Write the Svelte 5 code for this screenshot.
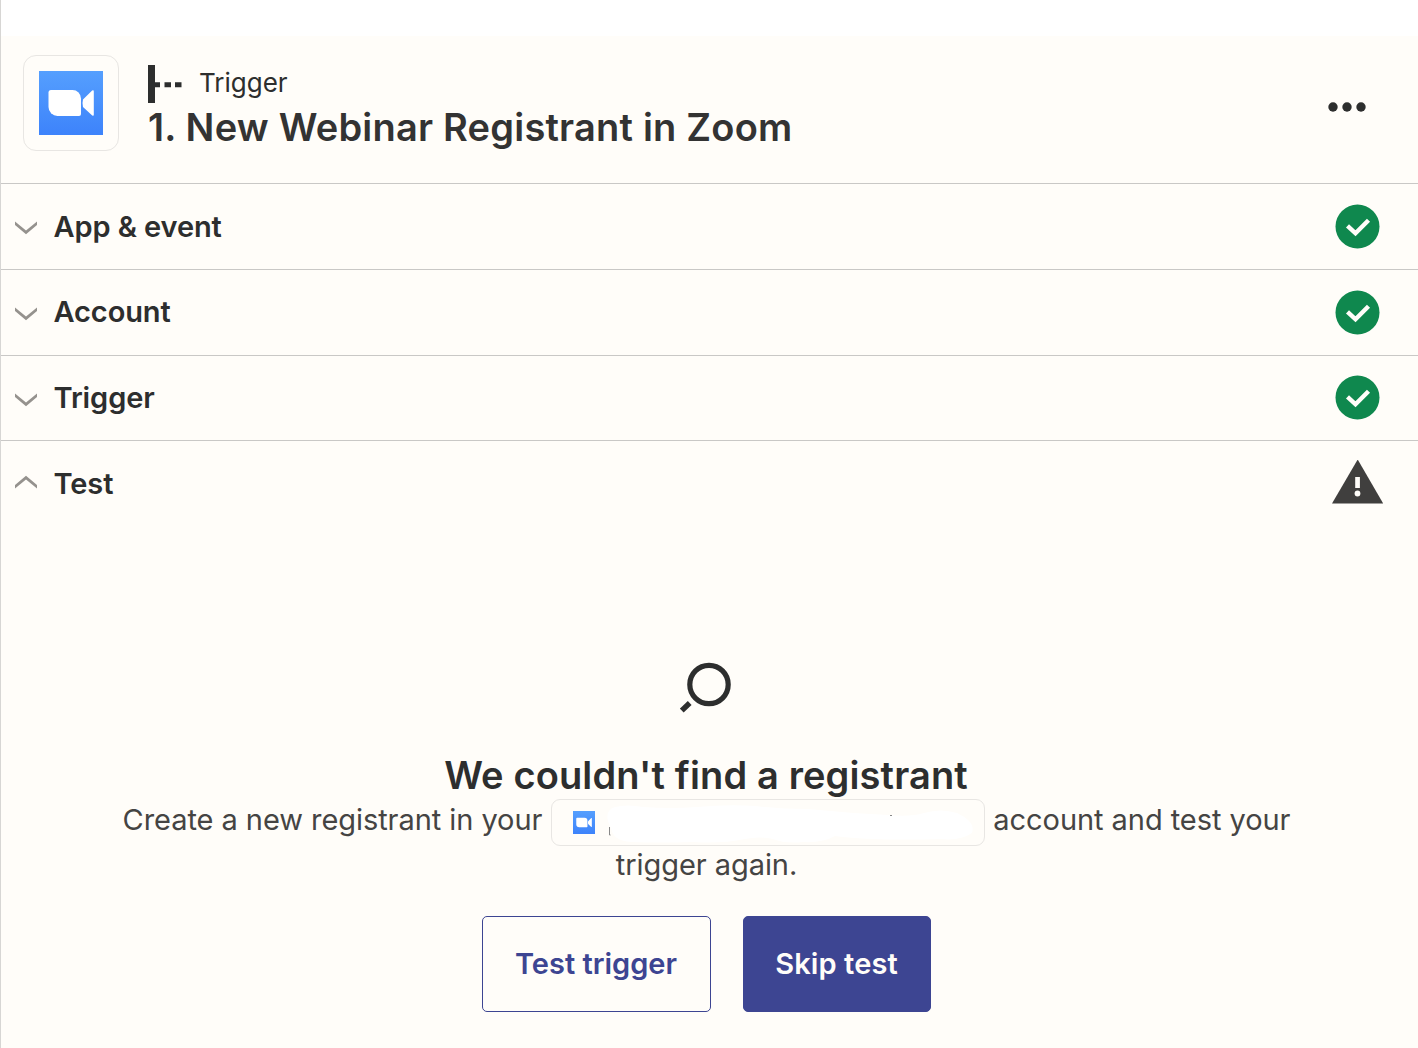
<script>
	// steps of the zap editor, only the last one is expanded
	let sections = [
		{ name: 'app', label: 'App & event', done: true, open: false },
		{ name: 'account', label: 'Account', done: true, open: false },
		{ name: 'trigger', label: 'Trigger', done: true, open: false },
		{ name: 'test', label: 'Test', done: false, open: true }
	];

	function toggle(item) {
		item.open = !item.open;
		sections = sections;
	}
</script>

{#snippet zoomLogo(id)}
	<svg class="zoom-logo" viewBox="0 0 64 64" preserveAspectRatio="none">
		<defs>
			<linearGradient {id} x1="0" y1="0" x2="0" y2="1">
				<stop offset="0" stop-color="#559ffe" />
				<stop offset="1" stop-color="#3d83fb" />
			</linearGradient>
		</defs>
		<rect width="64" height="64" fill="url(#{id})" />
		<path
			d="M12 19h21.500a8.500 8.500 0 0 1 8.500 8.500V43a2 2 0 0 1-2 2H18.500a9 9 0 0 1-9-9V21.500a2.500 2.500 0 0 1 2.500-2.500z"
			fill="#fff"
		/>
		<path d="M44 28.500L52.400 20.200C53.500 19 54.800 19 54.800 20.500V43.500C54.800 45.200 53.500 45 52.400 43.800L44 36Q43 32 44 28.500z" fill="#fff" />
	</svg>
{/snippet}

<div class="panel">
	<header>
		<div class="app-icon">{@render zoomLogo('logoLarge')}</div>
		<div class="heading">
			<div class="kind">
				<svg width="34" height="38" viewBox="0 0 34 38">
					<path d="M0 0h7v38H0zM7 17.300h5v5H7zM16.500 17.300h6.500v5h-6.500zM27 17.300h6.500v5H27z" fill="#2d2e2e" />
				</svg>
				<span>Trigger</span>
			</div>
			<h1>1. New Webinar Registrant in Zoom</h1>
		</div>
		<button class="more" aria-label="More">
			<svg width="38" height="10" viewBox="0 0 38 10" fill="#2d2e2e">
				<circle cx="5" cy="5" r="4.700" />
				<circle cx="19" cy="5" r="4.700" />
				<circle cx="33" cy="5" r="4.700" />
			</svg>
		</button>
	</header>

	{#each sections as item}
		<button class="row {item.name}" on:click={() => toggle(item)}>
			<svg class="chevron" class:open={item.open} width="24" height="14" viewBox="0 0 24 14">
				<path d="M1 .5L12 9.500L23 .5V3.900L12 13.300L1 3.900z" fill="#95928e" />
			</svg>
			<span class="label">{item.label}</span>
			{#if item.done}
				<svg class="status" width="52" height="45" viewBox="0 0 52 45">
					<circle cx="25.500" cy="22.500" r="22" fill="#0f884e" />
					<path d="M15.500 21.800L23.500 29.300L36.500 16.300" fill="none" stroke="#fffdf9" stroke-width="4.400" />
				</svg>
			{:else}
				<svg class="status warning" width="52" height="44" viewBox="0 0 52 44">
					<path d="M25.700 -.5L51.200 43.500H0z" fill="#403f3e" />
					<rect x="23.200" y="17" width="4.700" height="11" fill="#fffdf9" />
					<circle cx="25.500" cy="33.500" r="2.900" fill="#fffdf9" />
				</svg>
			{/if}
		</button>
	{/each}

	<div class="result">
		<svg class="search" width="52" height="52" viewBox="0 0 52 52">
			<circle cx="29" cy="22.500" r="19.200" fill="none" stroke="#2d2e2e" stroke-width="5.200" />
			<path d="M1.800 48.600L9.700 41" stroke="#2d2e2e" stroke-width="5.400" />
		</svg>
		<h2>We couldn't find a registrant</h2>
		<p>
			<span class="before">Create a new registrant in your</span>
			<span class="account-chip">
				{@render zoomLogo('logoSmall')}
				<svg class="redacted" width="378" height="38" viewBox="0 0 378 38">
					<path d="M6.500 22v8h1" fill="none" stroke="#888" />
					<path
						d="M12 2Q24 -1 40 2Q68 4 94 2Q126 -1 152 1Q178 4 205 4Q245 8 285 10Q308 12 321 8Q338 3 354 8Q373 17 369 28Q357 36 338 34Q300 35 270 34Q246 33 232 31Q220 38 200 37Q182 39 170 34Q155 31 142 34Q118 39 90 37Q54 38 28 37Q10 36 8 23Q-1 6 12 2z"
						fill="#fff"
					/>
					<path d="M287 10.500h2" fill="none" stroke="#888" />
				</svg>
			</span>
			<span class="after">account and test your</span>
		</p>
		<p class="last">trigger again.</p>
		<div class="actions">
			<button class="test-button">Test trigger</button>
			<button class="skip-button">Skip test</button>
		</div>
	</div>
</div>

<style>
	:global(body) {
		background: #fff;
		overflow: hidden;
	}
	* {
		box-sizing: border-box;
		margin: 0;
	}
	button {
		padding: 0;
		font-family: inherit;
		cursor: pointer;
	}
	svg {
		display: block;
		flex: none;
	}
	.panel {
		height: 1048px;
		padding-top: 36px;
		border-left: 1px solid #d7d6d4;
		background: linear-gradient(#fff 36px, #fffdf9 36px);
		font-family: Inter, sans-serif;
		color: #2d2e2e;
		white-space: nowrap;
	}
	header {
		display: flex;
		height: 147px;
		padding: 19px 52px 0 22px;
	}
	.app-icon {
		width: 96px;
		height: 96px;
		padding: 15px;
		border: 1px solid #e8e6e3;
		border-radius: 13px;
	}
	.zoom-logo {
		width: 64px;
		height: 64px;
	}
	.heading {
		flex: 1;
		padding: 10px 0 0 29px;
	}
	.kind {
		display: flex;
		gap: 17px;
		height: 38px;
		font-size: 26px;
		line-height: 36px;
	}
	h1 {
		font-size: 38px;
		font-weight: 600;
		line-height: 48px;
		letter-spacing: 0.21px;
		color: #333;
	}
	.more {
		height: 10px;
		margin-top: 47px;
		border: 0;
		background: none;
	}
	.row {
		display: flex;
		align-items: center;
		width: 100%;
		height: 86px;
		padding: 0 34px 1px 13px;
		border: 0;
		border-top: 1px solid #c9c8c6;
		background: none;
		color: #2d2e2e;
		text-align: left;
	}
	.row.trigger {
		height: 85px;
	}
	.chevron {
		margin-top: 4px;
	}
	.chevron.open {
		margin-top: -3px;
		transform: scaleY(-1);
	}
	.warning {
		margin-top: -2px;
	}
	.label {
		flex: 1;
		padding-left: 15.500px;
		font-size: 29px;
		font-weight: 600;
		letter-spacing: -0.1px;
	}
	.row.account .label {
		padding-bottom: 2px;
	}
	.result {
		display: flex;
		flex-direction: column;
		align-items: center;
		padding: 136px 7px 0 0;
	}
	h2 {
		margin-top: 37px;
		font-size: 38px;
		font-weight: 600;
		line-height: 48px;
		letter-spacing: 0.13px;
	}
	p {
		display: flex;
		justify-content: center;
		height: 47px;
		padding-left: 1px;
		font-size: 29px;
		line-height: 42px;
		letter-spacing: -0.06px;
		color: #454443;
	}
	.account-chip {
		display: flex;
		width: 434px;
		height: 47px;
		margin: 0 8.500px;
		padding: 5px 0 0 21px;
		border: 1px solid #e8e6e3;
		border-radius: 9px;
	}
	.account-chip .zoom-logo {
		width: 22px;
		height: 23px;
		margin: 6px 8px 0 0;
	}
	p.last {
		height: 70px;
		line-height: 38px;
	}
	.actions {
		display: flex;
		gap: 32px;
	}
	.actions button {
		height: 96px;
		padding-bottom: 2px;
		border: 1px solid #3d4592;
		border-radius: 5px;
		font-size: 29px;
		font-weight: 600;
	}
	.test-button {
		width: 229px;
		background: none;
		color: #3d4592;
	}
	.actions .skip-button {
		width: 188px;
		background: #3d4592;
		color: #fffdf9;
		letter-spacing: 0.1px;
	}
</style>
